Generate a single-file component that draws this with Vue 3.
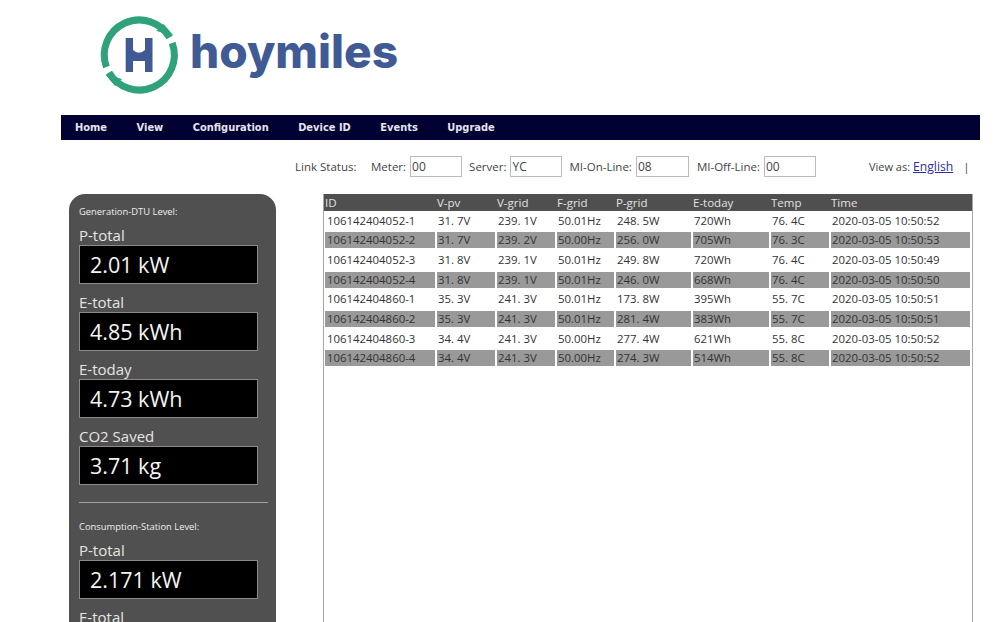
<template>
  <div class="page">
    <div class="logo">
      <svg class="logo-mark" width="90" height="90" viewBox="0 0 90 90">
        <path class="ring" d="M11.4 57A35 35 0 0 1 74.6 27.5" />
        <path class="ring" d="M77.2 33A35 35 0 0 1 14 62.5" />
        <polygon class="ring-head" points="78.3,25.5 61.5,21 68.5,14" />
        <polygon class="ring-head" points="10.5,64.5 27,69 20,76" />
        <path class="letter" d="M30.7 28H38V40Q44 45.5 50 40V28H57.5V62H50V51H38V62H30.7Z" />
      </svg>
      <span class="logo-text">hoymiles</span>
    </div>

    <nav class="menu">
      <a v-for="item in menu" :key="item" class="menu-item">{{ item }}</a>
    </nav>

    <div class="status">
      <span class="status-title">Link Status:</span>
      <label v-for="s in status" :key="s.label" class="status-item">
        {{ s.label }}
        <input class="status-input" type="text" :value="s.value" readonly />
      </label>
      <span class="view-as">View as: <a class="lang">English</a></span>
      <span class="sep">|</span>
    </div>

    <div class="main">
      <aside class="panel">
        <template v-for="(group, i) in groups" :key="group.title">
          <hr v-if="i > 0" class="divider" />
          <div class="group-title">{{ group.title }}</div>
          <div v-for="m in group.metrics" :key="m.label" class="metric">
            <div class="metric-label">{{ m.label }}</div>
            <div v-if="m.value" class="metric-value">{{ m.value }}</div>
          </div>
        </template>
      </aside>

      <section class="frame">
        <div class="row head">
          <div v-for="h in columns" :key="h">{{ h }}</div>
        </div>
        <div class="rows">
          <div
            v-for="(r, i) in rows"
            :key="r[0]"
            class="row"
            :class="{ alt: i % 2 === 1 }"
          >
            <div v-for="(c, j) in r" :key="j" class="cell">{{ c }}</div>
          </div>
        </div>
      </section>
    </div>
  </div>
</template>

<script setup>
const menu = ["Home", "View", "Configuration", "Device ID", "Events", "Upgrade"];

const status = [
  { label: "Meter:", value: "00" },
  { label: "Server:", value: "YC" },
  { label: "MI-On-Line:", value: "08" },
  { label: "MI-Off-Line:", value: "00" },
];

const groups = [
  {
    title: "Generation-DTU Level:",
    metrics: [
      { label: "P-total", value: "2.01 kW" },
      { label: "E-total", value: "4.85 kWh" },
      { label: "E-today", value: "4.73 kWh" },
      { label: "CO2 Saved", value: "3.71 kg" },
    ],
  },
  {
    title: "Consumption-Station Level:",
    metrics: [
      { label: "P-total", value: "2.171 kW" },
      { label: "E-total" },
    ],
  },
];

const columns = ["ID", "V-pv", "V-grid", "F-grid", "P-grid", "E-today", "Temp", "Time"];

const rows = [
  ["106142404052-1", "31. 7V", "239. 1V", "50.01Hz", "248. 5W", "720Wh", "76. 4C", "2020-03-05 10:50:52"],
  ["106142404052-2", "31. 7V", "239. 2V", "50.00Hz", "256. 0W", "705Wh", "76. 3C", "2020-03-05 10:50:53"],
  ["106142404052-3", "31. 8V", "239. 1V", "50.01Hz", "249. 8W", "720Wh", "76. 4C", "2020-03-05 10:50:49"],
  ["106142404052-4", "31. 8V", "239. 1V", "50.01Hz", "246. 0W", "668Wh", "76. 4C", "2020-03-05 10:50:50"],
  ["106142404860-1", "35. 3V", "241. 3V", "50.01Hz", "173. 8W", "395Wh", "55. 7C", "2020-03-05 10:50:51"],
  ["106142404860-2", "35. 3V", "241. 3V", "50.01Hz", "281. 4W", "383Wh", "55. 7C", "2020-03-05 10:50:51"],
  ["106142404860-3", "34. 4V", "241. 3V", "50.00Hz", "277. 4W", "621Wh", "55. 8C", "2020-03-05 10:50:52"],
  ["106142404860-4", "34. 4V", "241. 3V", "50.00Hz", "274. 3W", "514Wh", "55. 8C", "2020-03-05 10:50:52"],
];
</script>

<style>
html,
body {
  margin: 0;
  height: 622px;
  overflow: hidden;
  background: #fff;
}
</style>

<style scoped>
.page {
  width: 1000px;
  height: 622px;
  overflow: hidden;
  font-family: "Open Sans", "Liberation Sans", sans-serif;
  color: #333;
}

.logo {
  height: 115px;
  display: flex;
  align-items: flex-start;
  padding: 10px 0 0 95px;
  box-sizing: border-box;
}

.ring {
  fill: none;
  stroke: #2fa27c;
  stroke-width: 7;
}

.ring-head {
  fill: #2fa27c;
}

.letter {
  fill: #3f5a94;
}

.logo-text {
  margin: 13px 0 0 5px;
  font-family: Inter, Lato, sans-serif;
  font-size: 46px;
  line-height: 56px;
  font-weight: 800;
  color: #3f5a94;
}

.menu {
  margin-left: 61px;
  width: 919px;
  height: 25px;
  padding-left: 14px;
  box-sizing: border-box;
  background: #000033;
  display: flex;
  align-items: center;
  gap: 29.5px;
}

.menu-item {
  font-family: "DejaVu Sans", sans-serif;
  font-size: 9.9px;
  font-weight: 700;
  color: #e4e4ee;
}

.status {
  height: 54px;
  padding: 16px 0 0 295px;
  box-sizing: border-box;
  display: flex;
  align-items: flex-start;
  font-size: 11.5px;
  line-height: 21px;
  color: #444;
}

.status-title {
  width: 76px;
}

.status-item {
  display: flex;
  gap: 4px;
  margin-right: 7px;
}

.status-item:nth-child(4) {
  margin-right: 8px;
}

.status-item:nth-child(4) .status-input {
  width: 53px;
}

.status-input {
  width: 52px;
  height: 21px;
  padding: 0 1px;
  box-sizing: border-box;
  border: 1px solid #bbb;
  font-family: "Open Sans", sans-serif;
  font-size: 12px;
  color: #444;
  outline: none;
}

.view-as {
  margin-left: 46px;
  font-size: 11px;
}

.lang {
  color: #2d2d9c;
  font-size: 12.2px;
  text-decoration: underline;
}

.sep {
  margin-left: 10px;
}

.main {
  display: flex;
  align-items: flex-start;
  gap: 47px;
  padding-left: 69px;
}

.panel {
  width: 207px;
  height: 520px;
  padding: 12px 8px 0 10px;
  box-sizing: border-box;
  background: #505050;
  border-radius: 16px 16px 0 0;
  flex-shrink: 0;
}

.group-title {
  font-size: 9.4px;
  line-height: 12px;
  color: #eee;
  margin-bottom: 8px;
}

.metric-label {
  font-size: 15px;
  line-height: 19px;
  color: #e6e6e0;
  height: 19px;
}

.metric {
  margin-bottom: 9px;
  width: 179px;
}

.metric-value {
  height: 39px;
  box-sizing: border-box;
  border: 1px solid #8a8a8a;
  background: #000;
  color: #f4f4f0;
  font-size: 21.5px;
  line-height: 37px;
  padding-left: 10px;
}

.divider {
  margin: 17px 0 18px;
  width: 189px;
  height: 1px;
  border: none;
  background: #a0a0a0;
}

.frame {
  width: 650px;
  height: 520px;
  box-sizing: border-box;
  border: solid #a8a8a8;
  border-width: 0 1px;
  font-size: 11.4px;
}

.row {
  display: grid;
  grid-template-columns: 110px 58px 58px 57px 75px 76px 58px 139px;
  column-gap: 2px;
  margin-left: 1px;
}

.head {
  height: 17px;
  margin-left: 0;
  padding-left: 1px;
  background: #4f4f4f;
  color: #e2e2e2;
  font-size: 11.5px;
  line-height: 18px;
}

.rows {
  display: grid;
  row-gap: 3.7px;
  padding-top: 1.5px;
}

.cell {
  height: 16px;
  line-height: 16px;
  padding-left: 1px;
  white-space: nowrap;
}

.cell:first-child {
  padding-left: 2px;
}

.alt .cell {
  background: #999;
}
</style>
